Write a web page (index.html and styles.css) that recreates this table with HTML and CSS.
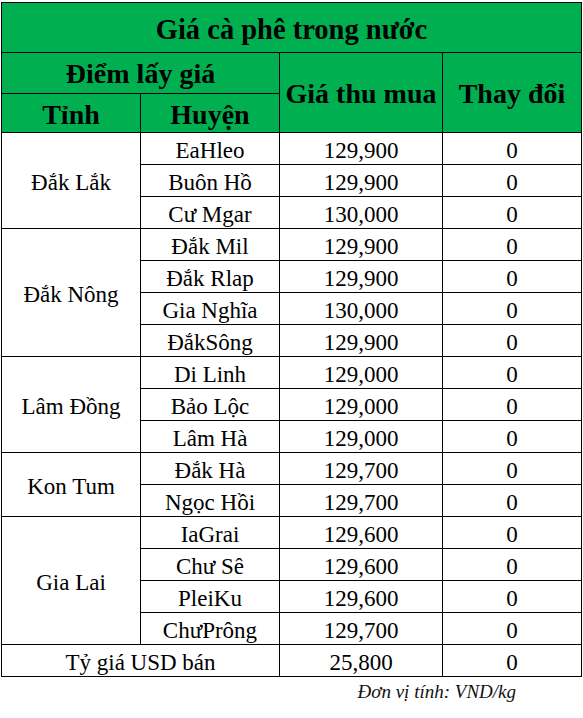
FILE: index.html
```html
<!DOCTYPE html>
<html lang="vi">
<head>
<meta charset="utf-8">
<title>Giá cà phê trong nước</title>
<link rel="stylesheet" href="styles.css">
</head>
<body>
<div class="page">
  <div class="sheet">
    <div class="cell head title">Giá cà phê trong nước</div>
    <div class="cell head span-c2">Điểm lấy giá</div>
    <div class="cell head span-r2">Giá thu mua</div>
    <div class="cell head span-r2">Thay đổi</div>
    <div class="cell head sub">Tỉnh</div>
    <div class="cell head sub">Huyện</div>

    <div class="cell span-r3">Đắk Lắk</div>
    <div class="cell">EaHleo</div><div class="cell">129,900</div><div class="cell">0</div>
    <div class="cell">Buôn Hồ</div><div class="cell">129,900</div><div class="cell">0</div>
    <div class="cell">Cư Mgar</div><div class="cell">130,000</div><div class="cell">0</div>

    <div class="cell span-r4">Đắk Nông</div>
    <div class="cell">Đắk Mil</div><div class="cell">129,900</div><div class="cell">0</div>
    <div class="cell">Đắk Rlap</div><div class="cell">129,900</div><div class="cell">0</div>
    <div class="cell">Gia Nghĩa</div><div class="cell">130,000</div><div class="cell">0</div>
    <div class="cell">ĐắkSông</div><div class="cell">129,900</div><div class="cell">0</div>

    <div class="cell span-r3">Lâm Đồng</div>
    <div class="cell">Di Linh</div><div class="cell">129,000</div><div class="cell">0</div>
    <div class="cell">Bảo Lộc</div><div class="cell">129,000</div><div class="cell">0</div>
    <div class="cell">Lâm Hà</div><div class="cell">129,000</div><div class="cell">0</div>

    <div class="cell span-r2">Kon Tum</div>
    <div class="cell">Đắk Hà</div><div class="cell">129,700</div><div class="cell">0</div>
    <div class="cell">Ngọc Hồi</div><div class="cell">129,700</div><div class="cell">0</div>

    <div class="cell span-r4">Gia Lai</div>
    <div class="cell">IaGrai</div><div class="cell">129,600</div><div class="cell">0</div>
    <div class="cell">Chư Sê</div><div class="cell">129,600</div><div class="cell">0</div>
    <div class="cell">PleiKu</div><div class="cell">129,600</div><div class="cell">0</div>
    <div class="cell">ChưPrông</div><div class="cell">129,700</div><div class="cell">0</div>

    <div class="cell span-c2">Tỷ giá USD bán</div>
    <div class="cell">25,800</div>
    <div class="cell">0</div>
  </div>
  <p class="note">Đơn vị tính: VND/kg</p>
</div>
</body>
</html>
```

FILE: styles.css
```css
html, body {
  margin: 0;
  padding: 0;
  background: #ffffff;
}

.page {
  padding: 2px 0 0 1px;
  font-family: "Liberation Serif", "Times New Roman", serif;
  color: #000000;
}

.sheet {
  width: 581px;
  box-sizing: border-box;
  display: grid;
  grid-template-columns: 138px 138px 162px 138px;
  grid-template-rows: 49px 40px 38px repeat(17, 31px);
  gap: 1px;
  padding: 1px;
  background: #000000;
}

.cell {
  background: #ffffff;
  display: flex;
  align-items: center;
  justify-content: center;
  padding-top: 3px;
  box-sizing: border-box;
  font-size: 23px;
  line-height: 1;
  white-space: nowrap;
}

.head {
  background: #00b050;
  font-weight: bold;
  font-size: 28px;
}

.title {
  grid-column: 1 / -1;
  padding-top: 5px;
  font-size: 28.5px;
}

.span-c2 {
  grid-column: span 2;
}

.span-r2 {
  grid-row: span 2;
}

.span-r3 {
  grid-row: span 3;
}

.span-r4 {
  grid-row: span 4;
}

.head.span-c2 {
  padding-top: 1px;
}

.head.span-r2 {
  padding-top: 2px;
}

.note {
  margin: 0;
  padding: 4px 67px 0 0;
  text-align: right;
  font-style: italic;
  font-size: 19px;
  color: #111111;
}
```
